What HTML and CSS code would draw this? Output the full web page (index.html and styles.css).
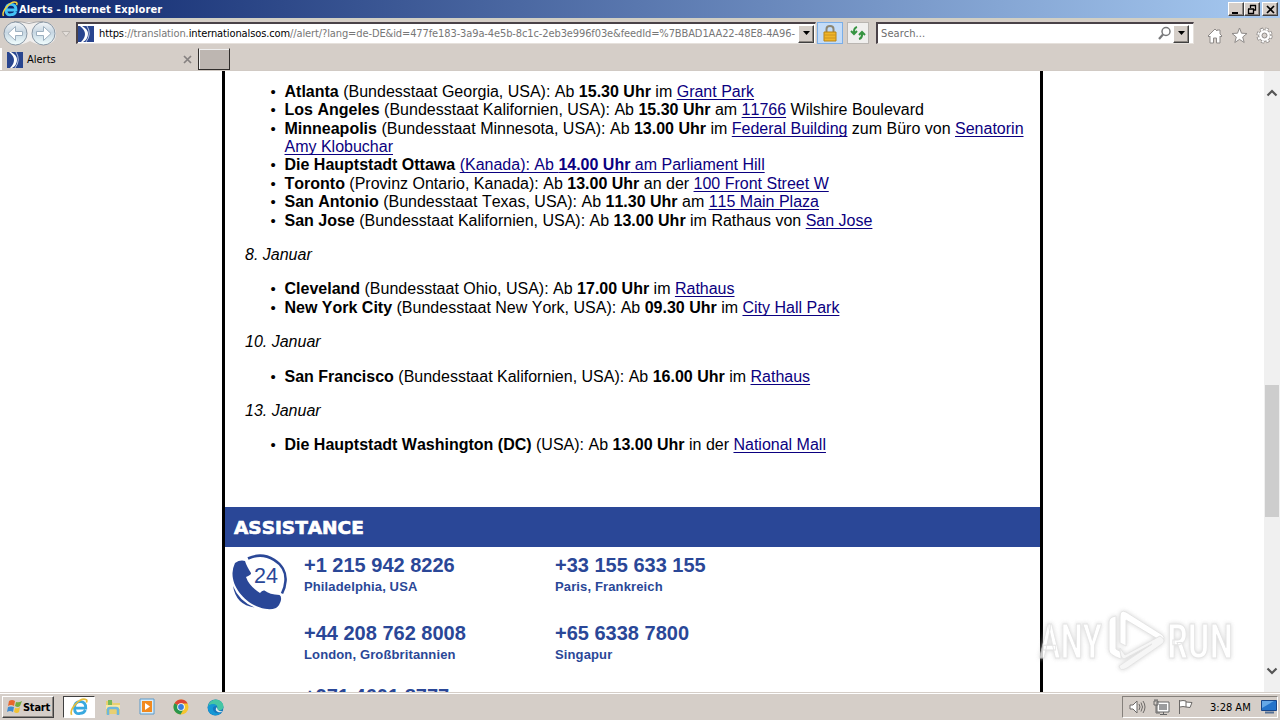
FILE: index.html
```
<!DOCTYPE html>
<html lang="de">

<head>
    <meta charset="utf-8">
    <title>Alerts</title>
    <link rel="stylesheet" href="styles.css">
</head>

<body>
    <header class="titlebar">
        <svg class="ie" width="16" height="16" viewBox="0 0 16 16">
            <path d="M4.5 9H14Q14 3.3 9 3.3T4 9t5 4.7q3.5 0 4.7-3" fill="none" stroke="#43c3f5" stroke-width="2.8" />
            <path d="M1.5 15C-1 10 9-1 14.5 1.5q1 .8 0 2.5" fill="none" stroke="#f5d13c" stroke-width="1.5" />
        </svg>
        <h1>Alerts - Internet Explorer</h1>
        <div class="winbuttons">
            <button><svg width="13" height="11"><path d="M2 8h6v2H2z" /></svg></button>
            <button><svg width="13" height="11"><path d="M4.5 1v3M4 1.5h6M9.5 1v5H8M2 5h6M2.5 5v4.5h5V5" fill="none" stroke="#000" stroke-width="1.3" /></svg></button>
            <button class="close"><svg width="13" height="11"><path d="M3 2l7 7M10 2L3 9" stroke="#000" stroke-width="1.7" /></svg></button>
        </div>
    </header>

    <nav class="toolbar">
        <svg class="arrows" width="72" height="29" viewBox="0 0 72 29">
            <defs>
                <linearGradient id="glass" x1="0" y1="0" x2="0" y2="1">
                    <stop offset="0" stop-color="#f4f6f8" />
                    <stop offset=".45" stop-color="#c6d6e2" />
                    <stop offset="1" stop-color="#f2ffff" />
                </linearGradient>
            </defs>
            <path d="M14 2h30q12 2 12 12T44 25q-7 0-14-4-7 4-15 4z" fill="#f0eeed" />
            <path d="M14 1.500q8 0 15 2 7-2 14-2" fill="none" stroke="#aaa9aa" />
            <circle cx="15.500" cy="13.500" r="11.500" fill="url(#glass)" stroke="#8997a5" />
            <circle cx="43.500" cy="13.500" r="11.500" fill="url(#glass)" stroke="#8997a5" />
            <path d="M15.500 6.500l-7.500 7 7.500 7v-5h7v-4h-7zM43.500 6.500l7.500 7-7.500 7v-5h-7v-4h7z" fill="#fff" stroke="#9db0c0" />
            <path d="M62 11.500h8l-4 5z" fill="#e4dfdb" stroke="#bab5b0" />
        </svg>
        <div class="field address">
            <svg class="site" width="16" height="16" viewBox="0 0 16 16">
                <path d="M0 0h16v16H0z" fill="#29458f" />
                <path d="M4 0q6 3 6 8t-5 8h-2q4-4 4-8T2 0z" fill="#fff" />
                <path d="M9 0q5 8-1 16" fill="none" stroke="#b9c6e4" />
            </svg>
            <p class="url"><b>https</b>://translation.<b>internationalsos.com</b>//alert/?lang=de-DE&amp;id=477fe183-3a9a-4e5b-8c1c-2eb3e996f03e&amp;feedId=%7BBAD1AA22-48E8-4A96-</p>
            <button class="drop"><svg width="9" height="5"><path d="M1 0h7L4.500 4z" /></svg></button>
        </div>
        <div class="lock">
            <svg width="16" height="18" viewBox="0 0 16 18">
                <path d="M4.500 9V5Q4.500 2 8 2t3.500 3v4" fill="none" stroke="#8d8672" stroke-width="2" />
                <path d="M2 8h12v9H2z" fill="#efb52a" stroke="#b88313" />
                <path d="M2 11h12M2 14h12" stroke="#cd9420" />
            </svg>
        </div>
        <div class="refresh">
            <svg width="16" height="16" viewBox="0 0 16 16" fill="none" stroke="#369441" stroke-width="2">
                <path d="M7 2Q3.500 3 4 8M1 6l3 3 3-3M9 14q3.500-1 3-6M9 10l3-3 3 3" />
            </svg>
        </div>
        <div class="field search">
            <span>Search...</span>
            <svg width="15" height="15" viewBox="0 0 15 15" fill="none" stroke="#77787a">
                <circle cx="9" cy="5.500" r="4" stroke-width="1.500" />
                <path d="M6 8.500L2 13" stroke-width="2.200" />
            </svg>
            <button class="drop"><svg width="9" height="5"><path d="M1 0h7L4.500 4z" /></svg></button>
        </div>
        <div class="tools">
            <svg width="16" height="17" viewBox="0 0 16 17"><path d="M1 9l7-7 2 2V3h3v4l2 2-1 1-1-1v7H9.500v-5h-3v5H3V9l-1 1z" fill="#fff" stroke="#8e8a88" /></svg>
            <svg width="17" height="17" viewBox="0 0 17 17"><path d="M8.500 1l2 5.200 5.500.3-4.300 3.500 1.500 5.500-4.700-3.100-4.700 3.100 1.500-5.500L1 6.500l5.500-.3z" fill="#fff" stroke="#8e8a88" /></svg>
            <svg width="17" height="17" viewBox="0 0 17 17">
                <circle cx="8.500" cy="8.500" r="6.300" fill="none" stroke="#8e8a88" stroke-width="3.600" stroke-dasharray="3 1.948" />
                <circle cx="8.500" cy="8.500" r="5.800" fill="#fff" stroke="#8e8a88" />
                <circle cx="8.500" cy="8.500" r="6.300" fill="none" stroke="#fff" stroke-width="2" stroke-dasharray="2.200 2.748" stroke-dashoffset="-.4" />
                <circle cx="8.500" cy="8.500" r="2.500" fill="#d8d2cd" stroke="#8e8a88" />
            </svg>
        </div>
    </nav>

    <nav class="tabs">
        <div class="tab">
            <svg class="site" width="16" height="16" viewBox="0 0 16 16">
                <path d="M0 0h16v16H0z" fill="#29458f" />
                <path d="M4 0q6 3 6 8t-5 8h-2q4-4 4-8T2 0z" fill="#fff" />
                <path d="M9 0q5 8-1 16" fill="none" stroke="#b9c6e4" />
            </svg>
            <span>Alerts</span>
            <svg width="9" height="9"><path d="M1 1l7 7M8 1L1 8" stroke="#858180" stroke-width="1.700" /></svg>
        </div>
        <div class="newtab"></div>
    </nav>

    <main>
        <article class="alert">
            <div class="text">
                <ul>
                    <li><b>Atlanta</b> (Bundesstaat Georgia, USA): Ab <b>15.30 Uhr</b> im <a href="#">Grant Park</a></li>
                    <li><b>Los Angeles</b> (Bundesstaat Kalifornien, USA): Ab <b>15.30 Uhr</b> am <a href="#">11766</a> Wilshire Boulevard</li>
                    <li><b>Minneapolis</b> (Bundesstaat Minnesota, USA): Ab <b>13.00 Uhr</b> im <a href="#">Federal Building</a> zum Büro von <a href="#">Senatorin<br>Amy Klobuchar</a></li>
                    <li><b>Die Hauptstadt Ottawa</b> <a href="#">(Kanada): Ab <b>14.00 Uhr</b> am Parliament Hill</a></li>
                    <li><b>Toronto</b> (Provinz Ontario, Kanada): Ab <b>13.00 Uhr</b> an der <a href="#">100 Front Street W</a></li>
                    <li><b>San Antonio</b> (Bundesstaat Texas, USA): Ab <b>11.30 Uhr</b> am <a href="#">115 Main Plaza</a></li>
                    <li><b>San Jose</b> (Bundesstaat Kalifornien, USA): Ab <b>13.00 Uhr</b> im Rathaus von <a href="#">San Jose</a></li>
                </ul>
                <p>8. Januar</p>
                <ul>
                    <li><b>Cleveland</b> (Bundesstaat Ohio, USA): Ab <b>17.00 Uhr</b> im <a href="#">Rathaus</a></li>
                    <li><b>New York City</b> (Bundesstaat New York, USA): Ab <b>09.30 Uhr</b> im <a href="#">City Hall Park</a></li>
                </ul>
                <p>10. Januar</p>
                <ul>
                    <li><b>San Francisco</b> (Bundesstaat Kalifornien, USA): Ab <b>16.00 Uhr</b> im <a href="#">Rathaus</a></li>
                </ul>
                <p>13. Januar</p>
                <ul>
                    <li><b>Die Hauptstadt Washington (DC)</b> (USA): Ab <b>13.00 Uhr</b> in der <a href="#">National Mall</a></li>
                </ul>
            </div>
            <h2>ASSISTANCE</h2>
            <section class="assistance">
                <svg class="phone" width="56" height="56" viewBox="0 0 56 56">
                    <path d="M16 4.500C34-4 55 9 53.500 27q-.5 7-3.500 12.500" fill="none" stroke="#2a4797" stroke-width="2.600" />
                    <path d="M3 9Q8 5.500 13 7q1.500 5 6 12 .5 2-5 4 3 9 14 16 2-3 4.500-2.500 5 4 15 4.500 2 1 1.500 5-1 5-5 8-5 2-11 .8C16 52 0 35 .5 19Q1 13 3 9z" fill="#2a4797" />
                    <path d="M1 32q6 15 21.500 21.500Q4 51 1 32z" fill="#2a4797" />
                    <text x="22" y="29" font-size="21.500" fill="#2a4797">24</text>
                </svg>
                <div class="numbers">
                    <div><h3>+1 215 942 8226</h3><h4>Philadelphia, USA</h4></div>
                    <div><h3>+33 155 633 155</h3><h4>Paris, Frankreich</h4></div>
                    <div><h3>+44 208 762 8008</h3><h4>London, Großbritannien</h4></div>
                    <div><h3>+65 6338 7800</h3><h4>Singapur</h4></div>
                    <div><h3>+971 4601 8777</h3></div>
                </div>
            </section>
        </article>
        <aside class="scrollbar">
            <svg width="12" height="8"><path d="M1.500 6.500l4.500-4.500 4.500 4.500" fill="none" stroke="#555" stroke-width="2.200" /></svg>
            <div class="thumb"></div>
            <svg width="12" height="8"><path d="M1.500 1.500L6 6l4.500-4.500" fill="none" stroke="#555" stroke-width="2.200" /></svg>
        </aside>
        <svg class="watermark" width="210" height="76" viewBox="0 0 210 76">
            <g fill="#fff" stroke="#dedede">
                <text x="7" y="56" textLength="63" lengthAdjust="spacingAndGlyphs">ANY</text>
                <text x="135" y="56" textLength="66" lengthAdjust="spacingAndGlyphs">RUN</text>
                <path d="M77 20q0-5 7-6v33l5 3v7q-12-4-12-9z" />
                <path d="M88 15q0-8 6-5l35 22q6 4 0 7L94 18v26l-6-3z" />
                <path d="M88 46l5 7 35-19q7 4 2 8L95 66q-7 4-8-2l33-22-28 15q-4-1-4-11z" fill="#f4f4f4" />
            </g>
        </svg>
    </main>

    <footer class="taskbar">
        <button class="start">
            <svg width="17" height="16" viewBox="0 0 17 16">
                <path d="M3 2q3-2 6 0L8 7Q5 5 2 7z" fill="#e8672c" />
                <path d="M10 3q3 1 6-1l-2 5q-2 2-5 0z" fill="#72ad3d" />
                <path d="M2 8q3-1 6 0l-1 5q-3-2-6 0z" fill="#3f8bd0" />
                <path d="M9 9q3 1 5-1l-1 5q-2 2-5 0z" fill="#f1c231" />
            </svg>
            <span>Start</span>
        </button>
        <div class="task active">
            <svg width="18" height="18" viewBox="0 0 16 16">
                <path d="M4.500 9H14Q14 3.300 9 3.300T4 9t5 4.700q3.500 0 4.700-3" fill="none" stroke="#39a9df" stroke-width="2.500" />
                <path d="M1.500 15C-1 10 9-1 14.500 1.500q1 .8 0 2.500" fill="none" stroke="#e6bd3b" stroke-width="1.500" />
            </svg>
        </div>
        <div class="task">
            <svg width="18" height="18" viewBox="0 0 18 18">
                <path d="M2 3h6l1 2h7v11H2z" fill="#e8cf72" />
                <path d="M4 2h4v5H4z" fill="#78b957" /><path d="M2 7h14v4H2z" fill="#f8e9a4" />
                <path d="M4 17v-5q0-2 2-2h6q2 0 2 2v5" fill="none" stroke="#6eb7dc" stroke-width="2.500" />
            </svg>
        </div>
        <div class="task">
            <svg width="18" height="18" viewBox="0 0 18 18">
                <path d="M2 1h14v15H2z" fill="#d9edf9" stroke="#5b9acb" />
                <path d="M4 3h10v11H4z" fill="#f18a20" /><path d="M7 5l5 3.500L7 12z" fill="#fff" />
            </svg>
        </div>
        <div class="task">
            <svg width="16" height="16" viewBox="0 0 16 16">
                <circle cx="8" cy="8" r="7.500" fill="#f5c52f" />
                <path d="M8 8L1.500 4.200A7.500 7.500 0 0 1 14.700 4.500H8z" fill="#dc4437" />
                <path d="M8 8L1.500 4.200A7.500 7.500 0 0 0 7.500 15.500l3.500-6z" fill="#29964d" />
                <circle cx="8" cy="8" r="3.800" fill="#fff" /><circle cx="8" cy="8" r="2.900" fill="#397ddd" />
            </svg>
        </div>
        <div class="task">
            <svg width="17" height="17" viewBox="0 0 17 17">
                <circle cx="8.500" cy="8.500" r="8" fill="#1777bd" />
                <path d="M1 7Q3 .5 9 .5q7 1 7.500 7 0 3-4 4-3-.5-2-3Q9 3 1 7z" fill="#45c6a4" />
                <path d="M1 7q5-4 9 0-6 0-3.500 5 3 4 8 1-3 4-8 3Q0 14 1 7z" fill="#1598d5" />
                <path d="M10 8q-3 3 1 5 3 1 5-1-3 1-5-1-1-1-1-3z" fill="#e7eff0" />
            </svg>
        </div>
        <div class="tray">
            <svg width="17" height="16" viewBox="0 0 17 16" fill="none" stroke="#6c6967"><path d="M1 6h3l4-4v12l-4-4H1z" fill="#fff" /><path d="M10 5q2 3 0 6M12 3.500q3 4.500 0 9M14 2q4 6 0 12" /></svg>
            <svg width="17" height="16" viewBox="0 0 17 16"><path d="M5 4h10v8H5z" fill="#9b9c9e" stroke="#fff" stroke-width="2" /><path d="M4 3h12v10H4zM7 15.500h7M10.500 13v2M1 2h4v4H1zM3 6v8h4M2 0v2M4 0v2" fill="none" stroke="#666" /></svg>
            <svg width="17" height="16" viewBox="0 0 17 16"><path d="M2.500 15V1M3 2q3-1 6 0v6q-3-1-6 0M9 3l6 .5-2 5-4-.5" fill="#fff" stroke="#6c6967" /></svg>
            <time>3:28 AM</time>
            <svg width="16" height="14" viewBox="0 0 16 14"><path d="M.5.5h15v10H.5z" fill="#2473ca" stroke="#174588" /><path d="M1 1h12L1 8z" fill="#65a8e7" /><path d="M4 12.500h9" stroke="#536f94" stroke-width="2" /></svg>
        </div>
    </footer>
</body>

</html>
```

FILE: styles.css
```
* {
    box-sizing: border-box;
}

body {
    margin: 0;
    width: 1280px;
    height: 720px;
    overflow: hidden;
    display: flex;
    flex-direction: column;
    background: #d5cec8;
    font-family: "DejaVu Sans Condensed", "DejaVu Sans", sans-serif;
    font-stretch: condensed;
    font-size: 11px;
    color: #000;
}

svg {
    display: block;
    flex: none;
}

h1, h2, h3, h4, p, ul {
    margin: 0;
    font-size: inherit;
}

button {
    display: flex;
    align-items: center;
    justify-content: center;
    padding: 0;
    background: #d5cec8;
    border: 1px solid;
    border-color: #fff #404040 #404040 #fff;
    box-shadow: inset -1px -1px #8c8782;
    font: inherit;
}

.titlebar {
    height: 18px;
    display: flex;
    align-items: center;
    padding: 0 2px;
    background: linear-gradient(to right, #0c256c, #a7caf1);
    color: #fff;
}

.titlebar h1 {
    flex: 1;
    margin-left: 1px;
    letter-spacing: 0.12px;
}

.winbuttons {
    display: flex;
}

.winbuttons button {
    width: 16px;
    height: 14px;
}

.winbuttons .close {
    margin-left: 2px;
}

.toolbar {
    height: 30px;
    display: flex;
    align-items: flex-start;
    border-top: 2px solid #d1cfc4;
}

.arrows {
    margin-right: 4px;
}

.field {
    display: flex;
    align-items: center;
    height: 22px;
    margin-top: 2px;
    background: #fff;
    border: 1px solid #e6e1dc;
    border-top: 2px solid #4a4248;
    border-left: 2px solid #4a4248;
}

.address {
    width: 740px;
    padding-right: 1px;
}

.url {
    flex: 1;
    margin-left: 5px;
    color: #777;
    white-space: nowrap;
    letter-spacing: -0.11px;
}

.url b {
    color: #000;
    font-weight: normal;
}

.drop {
    width: 16px;
    height: 18px;
}

.lock, .refresh {
    display: flex;
    align-items: center;
    justify-content: center;
    height: 22px;
    margin-top: 2px;
    border: 1px solid #7aaee8;
    background: #c4dcf8;
}

.lock {
    width: 26px;
    margin-left: 1px;
}

.refresh {
    width: 22px;
    margin-left: 4px;
    border-color: #bab6b2;
    background: #f0efee;
}

.search {
    width: 318px;
    margin-left: 7px;
    padding: 0 4px 0 3px;
    color: #6d6d6d;
}

.search span {
    flex: 1;
    letter-spacing: 0.1px;
}

.search .drop {
    margin-left: 1px;
}

.tools {
    display: flex;
    gap: 8px;
    padding: 7px 0 0 13px;
}

.tabs {
    height: 23px;
    display: flex;
    border-bottom: 1px solid #d1cac4;
}

.tab {
    width: 198px;
    display: flex;
    align-items: center;
    padding: 1px 6px 0 5px;
    border-left: 2px solid #fff;
}

.tab span {
    flex: 1;
    margin-left: 4px;
}

.newtab {
    width: 32px;
    height: 22px;
    margin-left: 0;
    background: #bdb6b1;
    border: 1px solid #fff;
    border-color: #d5cec8 #302d2b #302d2b #302d2b;
    box-shadow: inset 1px 1px #eee;
}

main {
    position: relative;
    height: 621px;
    display: flex;
    justify-content: space-between;
    overflow: hidden;
    background: #fff;
}

.alert {
    width: 821px;
    margin-left: 222px;
    border: solid #000;
    border-width: 0 3px;
    font-family: "Liberation Sans", Arial, sans-serif;
    font-stretch: normal;
    font-kerning: none;
}

.text {
    height: 436px;
    padding: 11.7px 0 0 20px;
    font-size: 16px;
    line-height: 18.4px;
}

.text ul {
    margin-bottom: 16px;
    padding-left: 39.5px;
    list-style: none;
}

.text li::before {
    content: "•";
    float: left;
    margin-left: -14px;
    font-size: 15px;
}

.text p {
    margin-bottom: 16px;
    font-style: italic;
}

.text a {
    color: #0b0080;
    text-decoration-thickness: 1px;
    text-underline-offset: 2px;
    text-decoration-skip-ink: none;
}

.alert h2 {
    height: 40px;
    padding-left: 9px;
    background: #2a4797;
    color: #fff;
    font-family: "DejaVu Sans", sans-serif;
    font-size: 18.5px;
    font-weight: bold;
    line-height: 41px;
    -webkit-text-stroke: 0.7px #fff;
}

.assistance {
    display: flex;
    padding: 7px 0 0 7px;
    color: #2a4797;
}

.numbers {
    display: grid;
    grid-template-columns: 251px 251px;
    grid-template-rows: 68px 63px;
    margin-left: 16px;
}

.numbers h3 {
    font-size: 20px;
    line-height: 22px;
}

.numbers h4 {
    font-size: 13px;
    line-height: 21px;
    letter-spacing: 0.13px;
}

.scrollbar {
    width: 16px;
    display: flex;
    flex-direction: column;
    align-items: center;
    padding: 18px 0 17px;
    background: #f0f0f0;
}

.thumb {
    width: 14px;
    height: 132px;
    margin: 288px 0 auto;
    background: #cdcdcd;
}

.watermark {
    position: absolute;
    left: 1032px;
    top: 531px;
    opacity: 0.8;
    font-family: Roboto, sans-serif;
    font-size: 49px;
    font-weight: 500;
    filter: drop-shadow(0 0 2px #ccc);
}

.taskbar {
    height: 28px;
    display: flex;
    align-items: center;
    padding: 1px 2px 0;
    border-top: 1px solid #d5cec8;
    box-shadow: inset 0 1px #fff;
}

.start {
    width: 52px;
    height: 22px;
    margin-right: 9px;
    font-weight: bold;
    letter-spacing: -0.2px;
}

.task {
    width: 32px;
    height: 22px;
    margin-right: 2px;
    display: flex;
    align-items: center;
    justify-content: center;
}

.active {
    background: #fff;
    border: 1px solid;
    border-color: #404040 #fff #fff #404040;
}

.tray {
    width: 156px;
    height: 22px;
    margin-left: auto;
    display: flex;
    align-items: center;
    padding-left: 6px;
    border: 1px solid;
    border-color: #85807b #fff #fff #85807b;
    gap: 7px;
}

.tray time {
    width: 42px;
    margin: 0 2px 0 9px;
    white-space: nowrap;
}
```
